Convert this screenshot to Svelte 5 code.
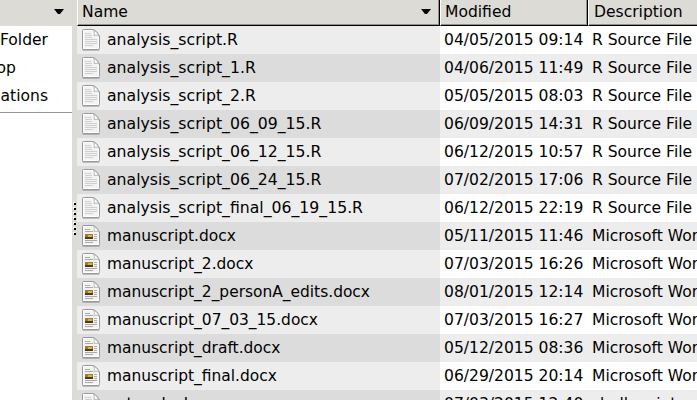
<script>
  const files = [
    ['analysis_script.R', '04/05/2015 09:14', 'R Source File'],
    ['analysis_script_1.R', '04/06/2015 11:49', 'R Source File'],
    ['analysis_script_2.R', '05/05/2015 08:03', 'R Source File'],
    ['analysis_script_06_09_15.R', '06/09/2015 14:31', 'R Source File'],
    ['analysis_script_06_12_15.R', '06/12/2015 10:57', 'R Source File'],
    ['analysis_script_06_24_15.R', '07/02/2015 17:06', 'R Source File'],
    ['analysis_script_final_06_19_15.R', '06/12/2015 22:19', 'R Source File'],
    ['manuscript.docx', '05/11/2015 11:46', 'Microsoft Word'],
    ['manuscript_2.docx', '07/03/2015 16:26', 'Microsoft Word'],
    ['manuscript_2_personA_edits.docx', '08/01/2015 12:14', 'Microsoft Word'],
    ['manuscript_07_03_15.docx', '07/03/2015 16:27', 'Microsoft Word'],
    ['manuscript_draft.docx', '05/12/2015 08:36', 'Microsoft Word'],
    ['manuscript_final.docx', '06/29/2015 20:14', 'Microsoft Word'],
    ['network.sh', '07/03/2015 12:40', 'shell script']
  ];
</script>

{#snippet arrow()}
  <svg class="arrow" width="10" height="5" viewBox="0 0 10 5"><path d="M0 0H10L6 5H4Z" fill="#000" /></svg>
{/snippet}

<div class="window">
  <aside>
    <header class="sidehead">{@render arrow()}</header>
    <nav>
      <div class="place">Folder</div>
      <div class="place short">op</div>
      <div class="place">ations</div>
      <hr />
    </nav>
  </aside>
  <div class="handle">
    {#each Array(7) as _}<i></i>{/each}
  </div>
  <main>
    <header class="cols">
      <div class="th first">Name{@render arrow()}</div>
      <div class="th">Modified</div>
      <div class="th">Description</div>
    </header>
    {#each files as [name, date, kind]}
      <div class="row">
        <div class="name" class:doc={name.endsWith('.docx')}>
          <svg width="20" height="23" viewBox="0 0 20 23">
            <path d="M1.5 21.8H18.5" stroke="#000" stroke-opacity=".25" stroke-width="2" />
            <path d="M2.5 1.5H12.5Q16 3 18.5 8V19.5Q18.5 21.5 16.5 21.5H3Q1.5 21.5 1.5 20V2.5Q1.5 1.5 2.5 1.5Z" fill="#f3f3f1" stroke="#999" />
            <path d="M12 2.5H2.5V20.5H17.5V8" fill="none" stroke="#fff" />
            <path d="M12.5 2Q14 4 13 7.5Q16 6.5 18 8Q16 3.5 12.5 2Z" fill="#fff" stroke="#aaa" stroke-width=".8" />
            {#if name.endsWith('.docx')}
              <path d="M4 5.5H9M4 7.5H12M4 16.5H16M4 18.5H12" stroke="#aaa" />
              <path d="M4 10H12V15H4Z" fill="#a17a30" />
              <path d="M4 13H12V15H4Z" fill="#4b3a19" />
              <path d="M7 11H11V13H7Z" fill="#dcae4c" />
              <path d="M13 10.5H16M13 12.5H16M13 14.5H16" stroke="#b0b0b0" />
            {:else}
              <path d="M4 5.5H10M4 7.5H11M4 9.5H11M4 11.5H16M4 13.5H16M4 15.5H16M4 17.5H12" stroke="#cfcfcf" />
            {/if}
          </svg>
          <span>{name}</span>
        </div>
        <div class="date">{date}</div>
        <div class="kind">{kind}</div>
      </div>
    {/each}
  </main>
</div>

<style>
  .window {
    display: flex;
    width: 697px;
    height: 400px;
    overflow: hidden;
    background: #dcdbd5;
    color: #000;
    font: 15.55px/28px 'DejaVu Sans', sans-serif;
    white-space: nowrap;
  }
  aside { width: 72px; flex: none; background: #fff; overflow: hidden; }
  .sidehead { height: 26px; background: #dcdbd5; display: flex; padding: 9px 0 0 54px; box-sizing: border-box; }
  nav { display: flex; flex-direction: column; align-items: flex-end; }
  .place { margin-right: 24px; }
  .short { margin-right: 56px; }
  hr { width: 100%; height: 1px; margin: 2px 0 0; border: 0; background: #98968d; }
  .handle { width: 5px; flex: none; display: flex; flex-direction: column; align-items: center; gap: 3px; padding-top: 203px; }
  i { width: 2px; height: 2px; background: #000; flex: none; box-shadow: -1px -1px #fff; }
  main { width: 620px; flex: none; }
  .cols, .row { display: grid; grid-template-columns: 363px 148px 109px; }
  .th { height: 26px; box-sizing: border-box; line-height: 24px; padding-left: 4px; border-left: 1px solid #fff; border-right: 1px solid #000; border-bottom: 1px solid #000; box-shadow: inset -1px -1px #92938a; display: flex; }
  .th:last-child { border-right: 0; padding-left: 5px; box-shadow: inset 0 -1px #92938a; }
  .first { justify-content: space-between; padding-right: 8px; }
  .arrow { flex: none; }
  .first .arrow { margin-top: 9px; }
  .row { height: 28px; }
  .name { background: #ededed; display: flex; padding-left: 4px; font-size: 15.7px; }
  .doc { font-size: 15.45px; }
  .name svg { flex: none; margin: 2px 6px 0 0; }
  .date { padding-left: 4px; }
  .kind { padding-left: 4px; overflow: hidden; }
  .date, .kind { background: #fff; }
  .row:nth-child(odd) .name { background: #dcdcdc; }
  .row:nth-child(odd) .date, .row:nth-child(odd) .kind { background: #ededed; }
</style>
